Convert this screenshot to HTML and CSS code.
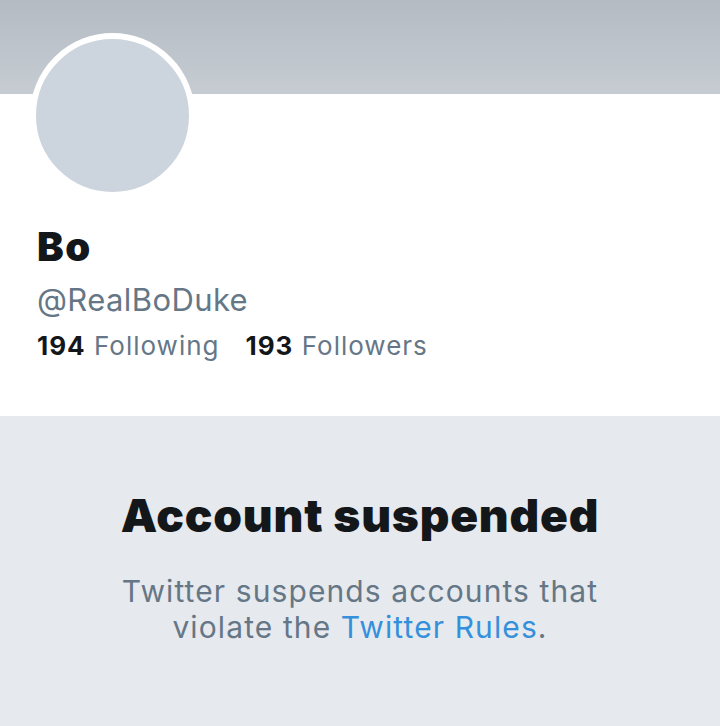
FILE: index.html
```html
<!DOCTYPE html>
<html>
<head>
<meta charset="utf-8">
<link rel="stylesheet" href="styles.css">
</head>
<body>
<div class="page">
  <div class="banner"></div>
  <section class="profile">
    <div class="avatar"></div>
    <h1 class="name">Bo</h1>
    <div class="handle">@RealBoDuke</div>
    <div class="stats">
      <span class="stat"><b>194</b> Following</span>
      <span class="stat"><b>193</b> Followers</span>
    </div>
  </section>
  <section class="suspended">
    <h2 class="title">Account suspended</h2>
    <p class="desc">Twitter suspends accounts that violate the <a class="link" href="#">Twitter Rules</a>.</p>
  </section>
</div>
</body>
</html>
```
FILE: styles.css
```css
html, body {
  margin: 0;
  padding: 0;
}
body {
  font-family: Inter, "Liberation Sans", sans-serif;
  background: #e6e9ed;
  width: 720px;
  height: 726px;
  overflow: hidden;
}
.page {
  display: flex;
  flex-direction: column;
  height: 726px;
}
.banner {
  height: 94px;
  background: linear-gradient(180deg, #b4bbc3 0%, #c6ccd2 100%);
}
.profile {
  background: #fff;
  height: 322px;
  padding-left: 37px;
  box-sizing: border-box;
  display: flex;
  flex-direction: column;
}
.avatar {
  width: 165px;
  height: 165px;
  margin-top: -61px;
  margin-left: -7px;
  border-radius: 50%;
  border: 6px solid #fff;
  background: #ccd5dd;
  box-sizing: border-box;
}
.name {
  margin: 25px 0 0;
  font-size: 40px;
  font-weight: 900;
  letter-spacing: 1.5px;
  line-height: 48px;
  color: #14171a;
}
.handle {
  margin-top: 10px;
  font-size: 31px;
  line-height: 38px;
  letter-spacing: 0.4px;
  color: #657786;
}
.stats {
  display: flex;
  gap: 26px;
  margin-top: 11px;
  font-size: 26px;
  line-height: 32px;
  letter-spacing: 1px;
  color: #657786;
}
.stats b {
  color: #14171a;
  font-weight: 700;
}
.suspended {
  flex: 1;
  background: #e6e9ed;
  display: flex;
  flex-direction: column;
  align-items: center;
  text-align: center;
}
.title {
  margin: 72px 0 0;
  font-size: 46px;
  font-weight: 900;
  line-height: 54px;
  letter-spacing: 0.8px;
  color: #14171a;
}
.desc {
  margin: 31px 0 0;
  width: 540px;
  font-size: 30px;
  line-height: 36px;
  letter-spacing: 1.1px;
  color: #657786;
}
.link {
  color: #3590dc;
  text-decoration: none;
}
```
